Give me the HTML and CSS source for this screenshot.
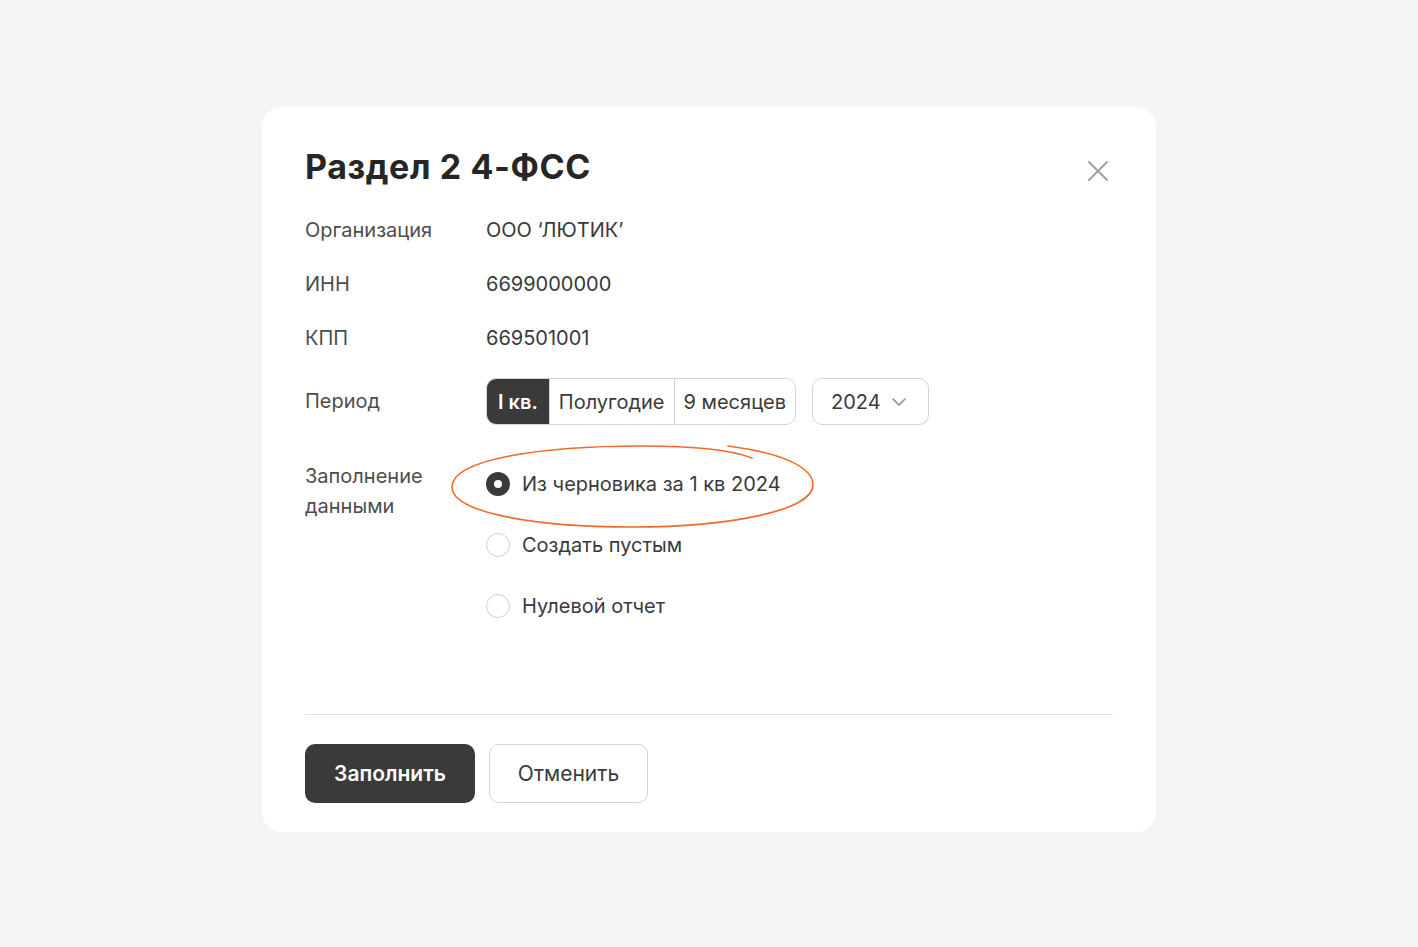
FILE: index.html
```html
<!DOCTYPE html>
<html lang="ru">
<head>
<meta charset="utf-8">
<title>Раздел 2 4-ФСС</title>
<link rel="stylesheet" href="styles.css">
</head>
<body>
<div class="modal">
  <div class="header">
    <h1 class="title">Раздел 2 4-ФСС</h1>
    <button class="close" aria-label="Закрыть">
      <svg width="24" height="24" viewBox="0 0 24 24"><path d="M3 3L21 21M21 3L3 21" stroke="#a0a0a0" stroke-width="2" stroke-linecap="round" fill="none"/></svg>
    </button>
  </div>
  <div class="form">
    <div class="label">Организация</div>
    <div class="value">ООО ‘ЛЮТИК’</div>
    <div class="label">ИНН</div>
    <div class="value">6699000000</div>
    <div class="label">КПП</div>
    <div class="value">669501001</div>
    <div class="label label-mid">Период</div>
    <div class="period">
      <div class="segmented">
        <div class="seg seg-active">I кв.</div>
        <div class="seg">Полугодие</div>
        <div class="seg">9 месяцев</div>
      </div>
      <div class="select">2024
        <svg width="16" height="10" viewBox="0 0 16 10"><path d="M2 2L8 8L14 2" stroke="#888" stroke-width="1.5" fill="none" stroke-linecap="round" stroke-linejoin="round"/></svg>
      </div>
    </div>
    <div class="label label-fill">Заполнение<br>данными</div>
    <div class="radios">
      <div class="radio"><span class="dot dot-on"></span>Из черновика за 1 кв 2024</div>
      <div class="radio"><span class="dot"></span>Создать пустым</div>
      <div class="radio"><span class="dot"></span>Нулевой отчет</div>
    </div>
  </div>
  <div class="divider"></div>
  <div class="actions">
    <button class="btn btn-primary">Заполнить</button>
    <button class="btn btn-secondary">Отменить</button>
  </div>
  <svg class="mark" width="894" height="724" viewBox="0 0 894 724">
    <path d="M490 351 C 470 343, 430 339, 380 339 C 280 339, 190 352, 190 380 C 190 405, 270 420, 370 420 C 470 420, 551 403, 551 378 C 551 360, 520 346, 466 339" stroke="#f26a2b" stroke-width="1.6" fill="none" stroke-linecap="round"/>
  </svg>
</div>
</body>
</html>
```
FILE: styles.css
```css
* { box-sizing: border-box; }
html, body { margin: 0; padding: 0; }
body {
  background: #f5f5f5;
  font-family: Inter, "Noto Sans", "Liberation Sans", sans-serif;
  color: #3a3a3a;
  padding-top: 107px;
}
.modal {
  position: relative;
  width: 894px;
  margin: 0 auto;
  background: #fff;
  border-radius: 20px;
  padding: 40px 43px 29px 43px;
}
.header {
  display: flex;
  justify-content: space-between;
  align-items: center;
  height: 40px;
}
.title {
  margin: 0;
  font-size: 34px;
  line-height: 40px;
  font-weight: 700;
  color: #262626;
  letter-spacing: 0.6px;
}
.close {
  border: 0;
  background: none;
  padding: 0;
  width: 24px;
  height: 24px;
  margin-right: 3px;
  margin-top: 8px;
  cursor: pointer;
}
.form {
  display: grid;
  grid-template-columns: 181px 1fr;
  row-gap: 24px;
  margin-top: 28px;
  font-size: 20px;
}
.label, .value {
  line-height: 30px;
}
.label { color: #4d4d4d; }
.value { color: #3a3a3a; }
.label-mid { align-self: center; }
.label-fill { padding-top: 13px; }
.period {
  display: flex;
  gap: 16px;
  height: 47px;
  margin-top: 1px;
  margin-bottom: -1px;
}
.segmented {
  display: flex;
  border: 1px solid #d4d4d4;
  border-radius: 10px;
  overflow: hidden;
}
.seg {
  display: flex;
  align-items: center;
  padding: 0 9px;
  color: #3a3a3a;
  border-left: 1px solid #d4d4d4;
}
.seg:first-child { border-left: 0; }
.seg-active {
  background: #3a3a3a;
  color: #fff;
  font-weight: 600;
  padding: 0 11px;
}
.select {
  display: flex;
  align-items: center;
  gap: 10px;
  width: 117px;
  padding-left: 18px;
  border: 1px solid #d4d4d4;
  border-radius: 10px;
}
.radios {
  display: flex;
  flex-direction: column;
  gap: 31px;
  padding-top: 21px;
}
.radio {
  display: flex;
  align-items: center;
  gap: 12px;
  line-height: 30px;
  color: #3a3a3a;
}
.dot {
  width: 24px;
  height: 24px;
  border-radius: 50%;
  border: 1.5px solid #cfcfcf;
  flex: none;
}
.dot-on {
  border: 8px solid #3a3a3a;
  background: #fff;
}
.divider {
  height: 1px;
  background: #e2e2e2;
  margin-top: 93px;
}
.actions {
  display: flex;
  gap: 14px;
  margin-top: 29px;
}
.btn {
  height: 59px;
  border-radius: 10px;
  font-family: inherit;
  font-size: 21px;
  padding: 0 20px;
  cursor: pointer;
}
.btn-primary {
  width: 170px;
  background: #3a3a3a;
  color: #fff;
  border: 0;
  font-weight: 600;
}
.btn-secondary {
  width: 159px;
  background: #fff;
  color: #3a3a3a;
  border: 1px solid #d4d4d4;
  font-weight: 400;
}
.mark {
  position: absolute;
  left: 0;
  top: 0;
  pointer-events: none;
}
```
